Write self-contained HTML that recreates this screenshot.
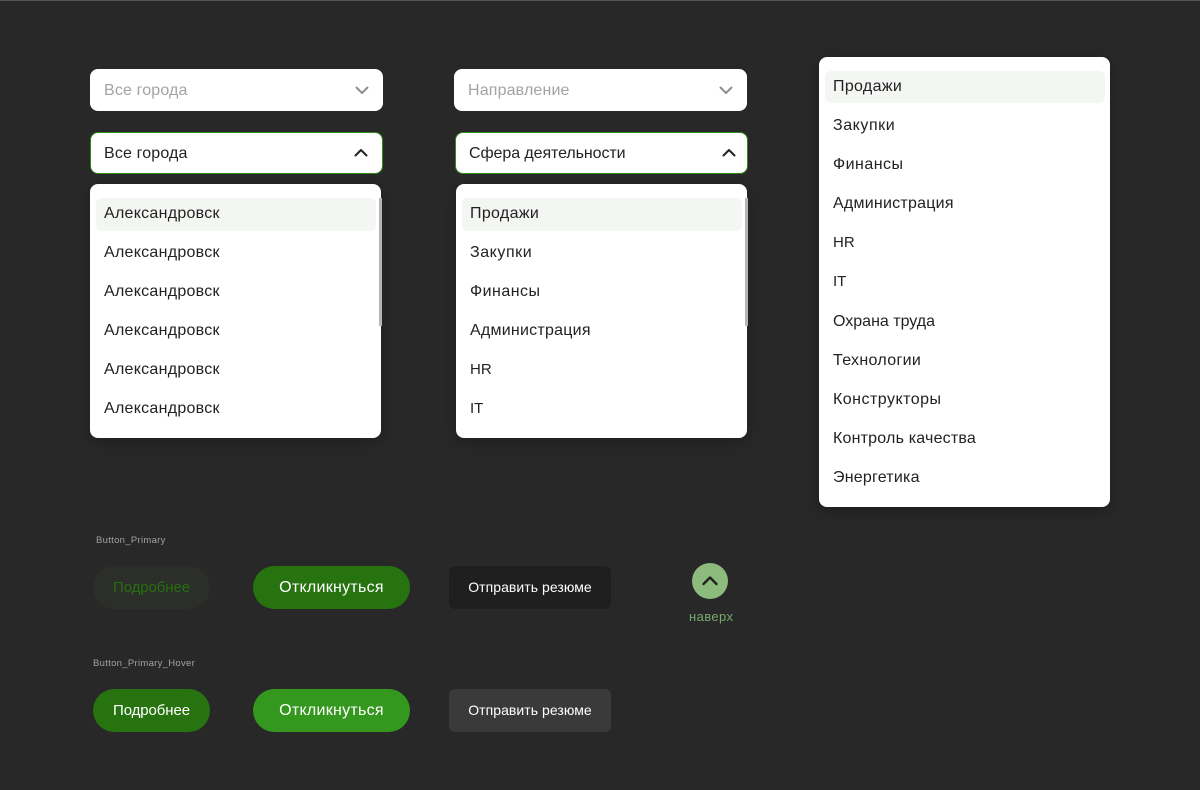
<!DOCTYPE html>
<html lang="ru">
<head>
<meta charset="utf-8">
<title>UI Kit</title>
<style>
html,body{margin:0;padding:0;}
body{position:relative;width:1200px;height:790px;overflow:hidden;background:#282828;font-family:"Liberation Sans",sans-serif;color:#222;}
.abs,.t{position:absolute;}
.t{white-space:nowrap;font-size:16px;line-height:20px;height:20px;letter-spacing:.25px;}
.topline{left:0;top:0;width:1200px;height:1px;background:#555;}
.field{position:absolute;background:#fff;border-radius:8px;box-sizing:border-box;}
.active{border:1.5px solid #2f8a1c;}
.list{position:absolute;background:#fff;border-radius:8px;box-shadow:0 4px 14px rgba(0,0,0,.25);}
.hl{position:absolute;background:#f4f6f3;border-radius:6px;height:33px;}
.bar{position:absolute;width:3px;height:128px;top:198px;background:#b5b5b5;}
.ph{color:#a3a3a3;}
svg{position:absolute;overflow:visible;}
.btn{position:absolute;height:43px;text-align:center;line-height:44px;font-size:16px;color:#fff;letter-spacing:.27px;white-space:nowrap;}
.pill{border-radius:22px;}
.more{font-size:15px;letter-spacing:-.1px;}
.rect{border-radius:6px;font-size:14px;line-height:42px;letter-spacing:.05px;}
.cap{position:absolute;white-space:nowrap;font-size:9.500px;line-height:12px;color:#a2a2a2;letter-spacing:.3px;}
</style>
</head>
<body>
<div class="abs topline"></div>

<div class="field" style="left:90px;top:69px;width:293px;height:42px"></div>
<div class="t ph" style="left:104px;top:81px;letter-spacing:.15px">Все города</div>
<svg style="left:355px;top:86px" width="14" height="9" viewBox="0 0 14 9"><path d="M1.500 1.500 7 7l5.500-5.500" fill="none" stroke="#8f8f8f" stroke-width="2" stroke-linecap="round" stroke-linejoin="round"/></svg>

<div class="field" style="left:454px;top:69px;width:293px;height:42px"></div>
<div class="t ph" style="left:468px;top:81px;letter-spacing:.15px">Направление</div>
<svg style="left:719px;top:86px" width="14" height="9" viewBox="0 0 14 9"><path d="M1.500 1.500 7 7l5.500-5.500" fill="none" stroke="#8f8f8f" stroke-width="2" stroke-linecap="round" stroke-linejoin="round"/></svg>

<div class="field active" style="left:90px;top:132px;width:293px;height:42px"></div>
<div class="t" style="left:104px;top:144px;letter-spacing:.15px">Все города</div>
<svg style="left:354px;top:148px" width="14" height="9" viewBox="0 0 14 9"><path d="M1.500 7.500 7 2l5.500 5.500" fill="none" stroke="#222" stroke-width="2" stroke-linecap="round" stroke-linejoin="round"/></svg>

<div class="field active" style="left:455px;top:132px;width:293px;height:42px"></div>
<div class="t" style="left:469px;top:144px;letter-spacing:-.08px">Сфера деятельности</div>
<svg style="left:722px;top:148px" width="14" height="9" viewBox="0 0 14 9"><path d="M1.500 7.500 7 2l5.500 5.500" fill="none" stroke="#222" stroke-width="2" stroke-linecap="round" stroke-linejoin="round"/></svg>

<div class="list" style="left:90px;top:184px;width:291px;height:254px"></div>
<div class="hl" style="left:96px;top:198px;width:280px"></div>
<div class="bar" style="left:379px"></div>
<div class="t" style="left:104px;top:204px;letter-spacing:.27px">Александровск</div>
<div class="t" style="left:104px;top:243px;letter-spacing:.27px">Александровск</div>
<div class="t" style="left:104px;top:282px;letter-spacing:.27px">Александровск</div>
<div class="t" style="left:104px;top:321px;letter-spacing:.27px">Александровск</div>
<div class="t" style="left:104px;top:360px;letter-spacing:.27px">Александровск</div>
<div class="t" style="left:104px;top:399px;letter-spacing:.27px">Александровск</div>

<div class="list" style="left:456px;top:184px;width:291px;height:254px"></div>
<div class="hl" style="left:462px;top:198px;width:280px"></div>
<div class="bar" style="left:745px"></div>
<div class="t" style="left:470px;top:204px;letter-spacing:.33px">Продажи</div>
<div class="t" style="left:470px;top:243px;letter-spacing:.55px">Закупки</div>
<div class="t" style="left:470px;top:282px;letter-spacing:.47px">Финансы</div>
<div class="t" style="left:470px;top:321px;letter-spacing:.24px">Администрация</div>
<div class="t" style="left:470px;top:360px;font-size:15px;letter-spacing:0">HR</div>
<div class="t" style="left:470px;top:399px;font-size:15px;letter-spacing:0">IT</div>

<div class="list" style="left:819px;top:57px;width:291px;height:450px"></div>
<div class="hl" style="left:825px;top:71px;width:280px;height:32px"></div>
<div class="t" style="left:833px;top:77px;letter-spacing:.33px">Продажи</div>
<div class="t" style="left:833px;top:116px;letter-spacing:.55px">Закупки</div>
<div class="t" style="left:833px;top:155px;letter-spacing:.47px">Финансы</div>
<div class="t" style="left:833px;top:194px;letter-spacing:.24px">Администрация</div>
<div class="t" style="left:833px;top:233px;font-size:15px;letter-spacing:0">HR</div>
<div class="t" style="left:833px;top:272px;font-size:15px;letter-spacing:0">IT</div>
<div class="t" style="left:833px;top:312px;letter-spacing:0">Охрана труда</div>
<div class="t" style="left:833px;top:351px;letter-spacing:.32px">Технологии</div>
<div class="t" style="left:833px;top:390px;letter-spacing:.48px">Конструкторы</div>
<div class="t" style="left:833px;top:429px;letter-spacing:.2px">Контроль качества</div>
<div class="t" style="left:833px;top:468px;letter-spacing:.22px">Энергетика</div>

<div class="cap" style="left:96px;top:535px">Button_Primary</div>
<div class="cap" style="left:93px;top:658px">Button_Primary_Hover</div>

<div class="btn pill more" style="left:93px;top:566px;width:117px;background:#2b2e29;color:#256f12">Подробнее</div>
<div class="btn pill" style="left:253px;top:566px;width:157px;background:#26730f">Откликнуться</div>
<div class="btn rect" style="left:449px;top:566px;width:162px;background:#1f1f1f">Отправить резюме</div>

<div class="abs" style="left:692px;top:563px;width:36px;height:36px;border-radius:50%;background:#8cbb7d"></div>
<svg style="left:702px;top:575px" width="16" height="11" viewBox="0 0 16 11"><path d="M1.500 9 8 2.500 14.500 9" fill="none" stroke="#222" stroke-width="2.400" stroke-linecap="round" stroke-linejoin="round"/></svg>
<div class="t" style="left:689px;top:607px;font-size:13px;color:#78a86a;letter-spacing:.4px">наверх</div>

<div class="btn pill more" style="left:93px;top:689px;width:117px;background:#26730f">Подробнее</div>
<div class="btn pill" style="left:253px;top:689px;width:157px;background:#33981d">Откликнуться</div>
<div class="btn rect" style="left:449px;top:689px;width:162px;background:#3a3a3a">Отправить резюме</div>
</body>
</html>
